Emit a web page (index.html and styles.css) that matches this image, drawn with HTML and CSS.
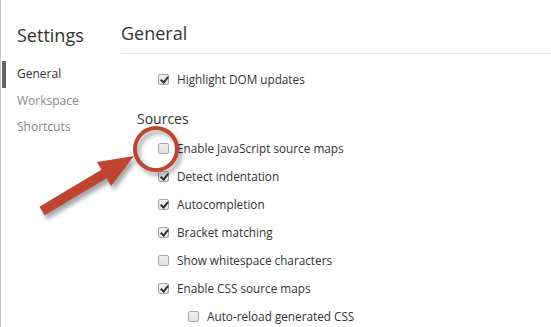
FILE: index.html
```html
<!DOCTYPE html>
<html lang="en">
<head>
    <meta charset="UTF-8">
    <meta name="viewport" content="width=device-width, initial-scale=1.0">
    <title>Settings</title>
    <link rel="stylesheet" href="styles.css">
</head>
<body>
    <div class="page">
        <div class="sidebar">
            <h1 class="sidebar-title">Settings</h1>
            <ul class="nav">
                <li class="nav-item active">General</li>
                <li class="nav-item">Workspace</li>
                <li class="nav-item">Shortcuts</li>
            </ul>
        </div>
        <div class="content">
            <h2 class="content-title">General</h2>
            <div class="section first">
                <label class="option"><input type="checkbox" checked> Highlight DOM updates</label>
            </div>
            <div class="section">
                <h3 class="section-title">Sources</h3>
                <label class="option"><input type="checkbox"> Enable JavaScript source maps</label>
                <label class="option"><input type="checkbox" checked> Detect indentation</label>
                <label class="option"><input type="checkbox" checked> Autocompletion</label>
                <label class="option"><input type="checkbox" checked> Bracket matching</label>
                <label class="option"><input type="checkbox"> Show whitespace characters</label>
                <label class="option"><input type="checkbox" checked> Enable CSS source maps</label>
                <label class="option sub"><input type="checkbox"> Auto-reload generated CSS</label>
            </div>
        </div>
    </div>

    <!-- Annotation overlay -->
    <svg class="annotation" width="551" height="327" viewBox="0 0 551 327">
        <g class="mark">
            <circle cx="156" cy="149" r="21" fill="none" stroke="#bf4431" stroke-width="4"/>
            <polygon points="39.4,206.7 101.4,169.7 96.9,162 134,156 111.1,186 106.6,178.3 44.6,215.3" fill="#bf4431"/>
        </g>
    </svg>
</body>
</html>
```

FILE: styles.css
```css
body {
    margin: 0;
    font-family: 'Open Sans', 'Noto Sans', sans-serif;
    background: #fff;
    color: #333;
    overflow: hidden;
}
.page {
    display: flex;
    height: 327px;
    border-left: 1px solid #c8c8c8;
}
.sidebar {
    width: 120px;
    flex-shrink: 0;
}
.sidebar-title {
    margin: 0;
    padding: 23px 0 0 16px;
    height: 38px;
    font-size: 18px;
    font-weight: 400;
    color: #333;
}
.nav {
    list-style: none;
    margin: 0;
    padding: 0;
}
.nav-item {
    height: 26.5px;
    line-height: 26.5px;
    padding-left: 16px;
    font-size: 12px;
    color: #888;
}
.nav-item.active {
    margin-left: 1px;
    padding-left: 11px;
    border-left: 4px solid #666;
    color: #333;
}
.content {
    flex: 1;
}
.content-title {
    margin: 0;
    padding: 21px 0 0 0;
    height: 32px;
    font-size: 18px;
    font-weight: 400;
    color: #333;
    border-bottom: 1px solid #e4e4e4;
}
.section {
    padding-left: 16px;
}
.section.first {
    padding-top: 11px;
    padding-bottom: 18px;
}
.section-title {
    margin: 0 0 7px;
    height: 16px;
    line-height: 16px;
    font-size: 14px;
    font-weight: 400;
    color: #333;
}
.option {
    display: flex;
    align-items: center;
    gap: 8px;
    height: 28px;
    padding-left: 21px;
    font-size: 11.75px;
    color: #333;
}
.option.sub {
    padding-left: 51px;
}
.option input {
    appearance: none;
    margin: 0;
    width: 11px;
    height: 11px;
    border: 1px solid #a6a6a6;
    border-radius: 2px;
    background: linear-gradient(#f2f2f2, #e0e0e0);
    position: relative;
}
.option input:checked::after {
    content: '';
    position: absolute;
    left: 3px;
    top: 0px;
    width: 3px;
    height: 6px;
    border-right: 2px solid #333;
    border-bottom: 2px solid #333;
    transform: rotate(40deg);
}
.annotation {
    position: absolute;
    top: 0;
    left: 0;
    pointer-events: none;
}
.mark {
    filter: drop-shadow(3px 4px 2px rgba(0, 0, 0, 0.35));
}
```
